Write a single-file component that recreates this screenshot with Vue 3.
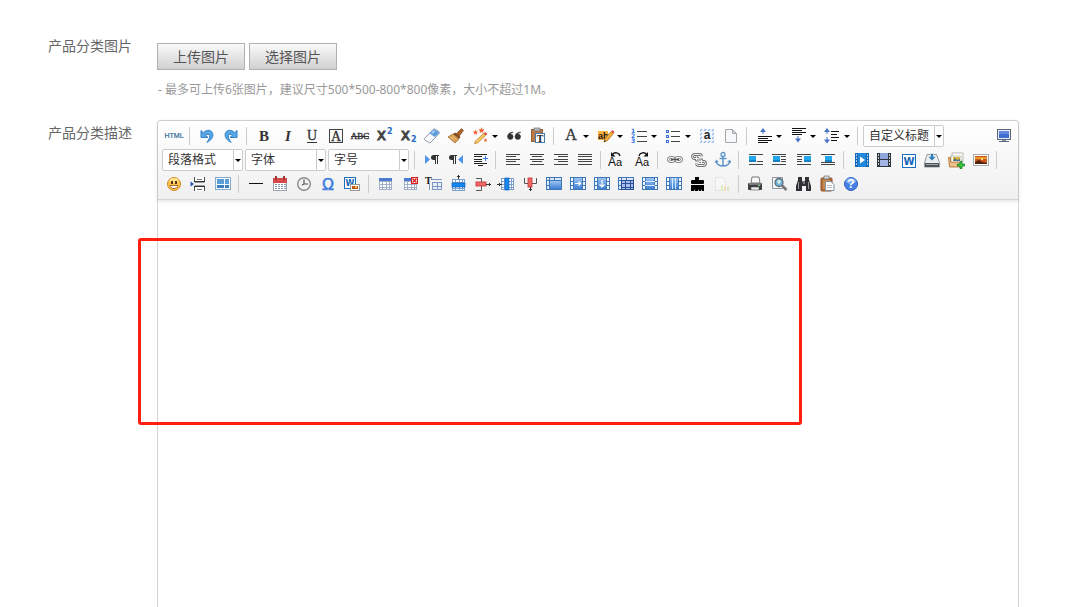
<script setup>
const r = (x, y, w, h, f, extra = '') => `<rect x="${x}" y="${y}" width="${w}" height="${h}" fill="${f}" ${extra}/>`
const p = (d, f = 'none', s = 'none', w = 1, extra = '') =>
  `<path d="${d}" fill="${f}" stroke="${s}" stroke-width="${w}" ${extra}/>`
const t = (x, y, size, text, fill, extra = '') =>
  `<text x="${x}" y="${y}" font-size="${size}" fill="${fill}" ${extra}>${text}</text>`
const serif = 'font-family="Liberation Serif, serif"'
const sans = 'font-family="Liberation Sans, sans-serif"'
const wide = 'font-family="DejaVu Sans, sans-serif" font-weight="bold"'
const mid = 'text-anchor="middle"'
const lines = (list, color = '#444') => list.map(([x, y, w]) => r(x, y, w, 1, color)).join('')
const mirror = (s) => `<g transform="translate(20 0) scale(-1 1)">${s}</g>`

const undo = p('M4 4.5v7h7L8.6 9.3c1.6-1.5 3.5-1.4 4 .2.5 2-.7 4.300-2.800 6.800 4.200-1.800 6.600-5 6-8.300C15 4 10.500 2.700 6.300 6.700z', '#5aa7e6', '#2f80c8')
const pilcrow = (x) =>
  p(`M${x + 3} 5.500h5M${x + 4.500} 5v9M${x + 6.500} 5v9`, 'none', '#333', 1) +
  p(`M${x + 4} 5H${x + 2.500}a2.500 2.500 0 0 0 0 5H${x + 4}z`, '#333')
const pencil = p('M8 16l1-3.500 6-7 2.500 2-6 7z', '#f0b03a', '#a8682a', 0.8) + p('M15 5.500l1.500-1.500 2 1.800-1.200 1.700z', '#e0504a') + p('M8 16l.6-2 1.400 1.200z', '#333')
const aa = (x, flip) =>
  t(x, 16, 12, 'A', '#111', sans) + t(x + 8, 16, 11, 'a', '#111', sans) +
  (flip
    ? p(`M${x + 4} 6c1-4 6-4 7.500-1.500`, 'none', '#111', 1.3) + p(`M${x + 13} 2v4.500H${x + 8.500}z`, '#111')
    : p(`M${x + 12} 6c-1-4-6-4-7.500-1.500`, 'none', '#111', 1.3) + p(`M${x + 3} 2v4.500h4.500z`, '#111'))
const upArrow = (x, y) => p(`M${x} ${y}l-3 4h6z`, '#4a70c8') + r(x - 0.5, y + 3, 1, 3, '#4a70c8')
const downArrow = (x, y) => r(x - 0.5, y, 1, 3, '#4a70c8') + p(`M${x} ${y + 6.500}l-3-4h6z`, '#4a70c8')
const photo = (x) => r(x, 6, 7, 6, '#1580c8') + r(x, 6, 7, 4, '#22a6ee')
const grid = (x, y, w, h, nx, ny, line = '#5f7fb5', fill = '#fff') => {
  let s = r(x + 0.5, y + 0.5, w - 1, h - 1, fill, `stroke="${line}"`)
  for (let i = 1; i < nx; i++) s += r(x + Math.round((w * i) / nx), y, 1, h, line)
  for (let i = 1; i < ny; i++) s += r(x, y + Math.round((h * i) / ny), w, 1, line)
  return s
}
const blueBox = 'url(#cell-blue)'
const edge = '#3f78b8'
const sideCells = r(2.5, 3.5, 15, 12, '#f4f9ff', `stroke="${edge}"`) + r(2, 7, 16, 1, edge) + r(2, 11, 16, 1, edge) + r(5, 3, 10, 13, edge) + r(6, 4, 8, 11, blueBox)
const topCells = r(2.5, 3.5, 15, 12, '#dce8fb', `stroke="${edge}"`) + r(5, 3, 1, 13, edge) + r(10, 3, 1, 4, edge) + r(2, 6, 16, 1, edge) + r(2, 11, 4, 1, edge)
const wordTile = (x, y, s) => r(x + 0.5, y + 0.5, s - 1, s - 1, '#fff', 'stroke="#1b6fc0"') + t(x + s / 2, y + s - 3, s - 4, 'W', '#1565b8', `${wide} ${mid}`)
const clipboard = r(3, 4, 11, 13, '#b5713c', 'rx="1" stroke="#8a4f27"') + r(6, 2, 5, 3, '#d8d8d8', 'stroke="#777" stroke-width=".7"') + r(5, 6, 7, 9, '#c98a50')

const icons = {
  html: t(10, 12, 7, 'HTML', '#2c6c99', `${sans} ${mid} stroke="#2c6c99" stroke-width=".2"`),
  undo,
  redo: mirror(undo),
  bold: t(10, 15, 15, 'B', '#333', `${serif} font-weight="bold" ${mid}`),
  italic: t(10, 15, 15, 'I', '#333', `${serif} font-weight="bold" font-style="italic" ${mid}`),
  underline: t(10, 14, 14, 'U', '#333', `${serif} ${mid} stroke="#333" stroke-width=".3"`) + r(5, 16, 10, 1, '#333'),
  border: r(3.5, 3.5, 13, 13, 'none', 'stroke="#444"') + t(10, 15, 14, 'A', '#333', `${serif} ${mid} stroke="#333" stroke-width=".3"`),
  strike: t(10, 13, 9, 'ABC', '#333', `${serif} ${mid} stroke="#333" stroke-width=".4"`) + r(1, 10, 18, 1, '#333'),
  sup: t(3, 14, 15, 'x', '#444', 'font-family="DejaVu Sans" stroke="#444"') + t(13, 8, 8, '2', '#2867c8', wide),
  sub: t(3, 14, 15, 'x', '#444', 'font-family="DejaVu Sans" stroke="#444"') + t(13, 16, 8, '2', '#2867c8', wide),
  eraser: p('M2.500 12.500l8.500-9q1-1 2-.4l4 2.500q1 .8.300 1.700l-8.500 9q-1 .8-2 .2l-4-2.500q-.8-.6-.3-1.500z', '#f7f9fb', '#8e98a8') + p('M7.500 7.500L11.200 3.700q.8-.7 1.600-.2l3.800 2.400q.8.600.200 1.300L13 11z', '#5a9be0') + p('M9 7l3-3 1.500 1-3 3z', '#a5cdf4'),
  brush: p('M10 8l5.500-5.500 2 2L13 10.500z', '#a8642c', '#7c451a', 0.6) + p('M9 6.500l5.500 4.500-1.500 2-6-5z', '#7e4a20') + p('M7 8l6 5-4 4-7-6z', '#d69a50', '#9b622a', 0.7) + p('M4 11l4 3M6 9.500l4.500 4', 'none', '#f3cd8c'),
  wand: p('M5.500 15L13.500 7.500l2 2-8 7.500-3 .5z', '#f6c95c', '#b67725', 0.7) + p('M13.500 7.500l2-1.500 2 2-2 1.500z', '#d75a42') + p('M11.500 1l.9 2.200 2.400.2-1.800 1.500.5 2.300-2-1.200-2 1.200.5-2.300-1.800-1.500 2.400-.2zM5.500 3.500l.8 1.900 2 .1-1.500 1.300.5 2-1.800-1.100-1.800 1.100.5-2-1.500-1.300 2-.1zM15.500 12l.6 1.500 1.500.1-1.200 1 .4 1.500-1.300-.8-1.300.8.400-1.500-1.200-1 1.500-.1z', '#f0683a'),
  quote: p('M9 6C5.500 6.200 3.500 8 3.500 10.800a2.800 2.800 0 1 0 2.600-2.900C6.800 7.200 7.600 6.700 9 6.500zM16.500 6C13 6.200 11 8 11 10.800a2.800 2.800 0 1 0 2.600-2.900c.7-.7 1.500-1.200 2.900-1.400z', '#333', '#333', 0.5),
  pasteText: r(3.5, 3.5, 11, 12, '#b97a4a', 'stroke="#94603a"') + r(6, 2, 6, 3, '#bbb', 'stroke="#666" stroke-width=".6"') + r(7.5, 7.5, 9, 9, '#fff', 'stroke="#4b78ac"') + t(12, 16, 10, 'T', '#222', `${serif} font-weight="bold" ${mid}`),
  foreColor: t(10, 14, 16, 'A', '#3a3a3a', `${serif} ${mid} stroke="#3a3a3a" stroke-width=".4"`),
  backColor: r(3, 5, 10, 9, '#ffb43c') + t(3, 13, 9, 'ab', '#111', `${sans} font-weight="bold"`) + `<g transform="translate(1 0)">${pencil}</g>`,
  orderedList: lines([[8, 5, 10], [8, 10, 10], [8, 15, 10]]) + [1, 2, 3].map((n, i) => t(2, 7 + i * 5, 6, n, '#2f6fe0', wide)).join(''),
  bulletList: lines([[8, 5, 9], [8, 10, 9], [8, 15, 9]]) + [5, 10, 15].map((y) => r(3.5, y - 0.5, 2, 2, '#dce8ff', 'stroke="#3c6fd8"')).join(''),
  selectAll: r(3, 3, 14, 14, 'url(#hatch)') + r(5, 5, 10, 10, '#f4f7fc') + t(10, 13, 12, 'a', '#222', `${sans} font-weight="bold" ${mid}`),
  page: p('M4.500 3.500h7l4 4v9h-11z', '#f6f7f8', '#a3a9ae') + p('M11.500 3.500v4h4z', '#ccd8e2', '#a3a9ae'),
  spaceTop: upArrow(9, 2) + lines([[4, 10, 14], [4, 12, 10], [4, 14, 14], [4, 16, 10]], '#111'),
  spaceBottom: lines([[4, 2, 14], [4, 4, 10], [4, 6, 14], [4, 8, 10]], '#111') + downArrow(10, 10),
  lineHeight: upArrow(5, 2) + downArrow(5, 11) + lines([[9, 5, 8], [9, 8, 6], [9, 11, 8], [9, 14, 6]], '#111'),
  fullscreen: r(3.5, 3.5, 13, 10, '#e9edf5', 'stroke="#5a6478"') + r(5, 5, 10, 7, '#3f6fd2') + r(5, 5, 10, 3, '#6287dc') + r(8, 14, 4, 1, '#8a93a3') + r(5, 15, 10, 1, '#5a6478'),
  ltr: p('M3 5l5 4.500L3 14z', '#4f93ec') + pilcrow(9),
  rtl: pilcrow(3) + p('M17 5l-5 4.500 5 4.500z', '#4f93ec'),
  indent: lines([[4, 4, 13], [4, 6, 8], [4, 9, 8], [4, 11, 8], [4, 13, 13], [8, 15, 5]], '#222') + r(13, 8, 5, 1, '#2f78e6') + r(15, 6, 1, 5, '#2f78e6'),
  left: lines([[3, 4, 14], [3, 6, 10], [3, 9, 14], [3, 11, 10], [3, 14, 14]]),
  center: lines([[3, 4, 14], [5, 6, 10], [3, 9, 14], [5, 11, 10], [3, 14, 14]]),
  right: lines([[3, 4, 14], [7, 6, 10], [3, 9, 14], [7, 11, 10], [3, 14, 14]]),
  justify: lines([[3, 4, 14], [3, 6, 14], [3, 9, 14], [3, 11, 14], [3, 14, 14]]),
  upper: aa(0, false),
  lower: aa(3, true),
  link: '<g fill="none" stroke="#777"><rect x="2.500" y="6.500" width="8" height="6" rx="3"/><rect x="4.500" y="8.500" width="4" height="2" rx="1"/><rect x="9.500" y="6.500" width="8" height="6" rx="3"/><rect x="11.500" y="8.500" width="4" height="2" rx="1"/></g>' + r(6, 9, 8, 1, '#555'),
  unlink: p('M10 8.500H5.500a2 2 0 0 1 0-4H10.500a2 2 0 0 1 2 2M10 11.500h4.500a2 2 0 0 1 0 4H9.500a2 2 0 0 1-2-2M7.500 6.500v3.500h5v3', 'none', '#777', 2.800) + p('M10 8.500H5.500a2 2 0 0 1 0-4H10.500a2 2 0 0 1 2 2M10 11.500h4.500a2 2 0 0 1 0 4H9.500a2 2 0 0 1-2-2M7.500 6.500v3.500h5v3', 'none', '#f5f5f5'),
  anchor: '<circle cx="10" cy="4.500" r="2" fill="none" stroke="#5c94c8" stroke-width="1.300"/>' + p('M10 6.500V16M6.500 8.500h7M3 11c0 3 3.500 5 7 5s7-2 7-5', 'none', '#5c94c8', 1.500) + p('M2 13l1-3.500L6 12zM18 13l-1-3.500-3 2.500z', '#5c94c8'),
  imgNone: lines([[3, 4, 14], [11, 11, 6], [3, 14, 14]]) + photo(3),
  imgLeft: lines([[2, 4, 14], [11, 6, 5], [11, 9, 5], [11, 11, 5], [2, 14, 14]]) + photo(3),
  imgRight: lines([[3, 4, 14], [3, 6, 5], [3, 9, 5], [3, 11, 5], [3, 14, 14]]) + photo(10),
  imgCenter: lines([[3, 4, 14], [3, 12, 14], [3, 14, 14]]) + photo(7),
  video: r(4, 3, 14, 14, '#1467b5') + r(7, 3, 8, 14, '#2188dc') + [4, 7, 10, 13].map((y) => r(5, y, 1, 2, '#a5cdf0') + r(16, y, 1, 2, '#a5cdf0')).join('') + p('M9 6.500l5 3.500-5 3.500z', '#fff'),
  film: r(2, 3, 14, 14, '#30343c') + r(5, 3, 8, 6, '#8ea6dc') + r(5, 10, 8, 6, '#a2b6e6') + [4, 7, 10, 13].map((y) => r(3, y, 1, 2, '#ccc') + r(14, y, 1, 2, '#ccc')).join(''),
  word: wordTile(3, 4, 14),
  drive: p('M4 4.500h9.500l3 8v4.500H1.500V13z', '#eceef0', '#7e8488', 0.8) + r(2, 13, 14, 4, '#4f5558') + r(3, 14, 12, 1, '#9da3a6') + p('M9 11L5 6.500h2.500V3.500h3v3H13z', '#2f7eb5', '#fff', 0.5),
  gallery: r(5, 3, 11, 8, '#fff', 'stroke="#999" stroke-width=".7"') + r(4, 6, 10, 7, '#fff', 'stroke="#aa8" stroke-width=".7"') + r(6, 7, 7, 4, '#d9b23c') + p('M6 11l2-3 2 2 3-1v2z', '#49719b') + p('M1.500 7.500h2V12h11v5h-12z', '#ecbf86', '#a76b2c', 0.8) + p('M13 11.500h2v2.500h2.500v2H15v2.500h-2V16h-2.500v-2H13z', '#41c843', '#138025', 0.8),
  scene: r(2.5, 4.5, 15, 11, '#fff', 'stroke="#aaa"') + r(4, 6, 12, 8, '#c9561a') + r(4, 7, 12, 2, '#f2972c') + r(10, 8, 2, 2, '#ffe07a') + p('M4 14v-2l4-2 3 2 5 1v1z', '#51200f'),
  smile: '<circle cx="10" cy="10" r="6.500" fill="#ffc54a" stroke="#d08a2c"/><ellipse cx="10" cy="6.500" rx="4.500" ry="2.500" fill="#ffe28b"/>' + r(7, 7, 2, 3, '#5a3213') + r(11, 7, 2, 3, '#5a3213') + p('M6 11.500h8c-.5 4-7.500 4-8 0z', '#fff', '#8b4d1c', 0.8),
  pageBreak: p('M6.500 3v5h10V3M6.500 17v-5h10v5', '#fff', '#434b57', 1) + r(6, 7, 11, 1, '#333') + r(6, 12, 11, 1, '#333') + r(9, 5, 5, 1, '#777') + r(9, 15, 5, 1, '#777') + p('M2.500 7.500L6 10l-3.500 2.500z', '#2452ba'),
  template: r(3.5, 3.5, 15, 12, '#f4faff', 'stroke="#86aac8"') + r(5, 5, 7, 5, '#5a9fd6') + r(5, 11, 7, 3, '#3e80bd') + r(13, 5, 4, 5, '#5a9fd6') + r(13, 11, 4, 3, '#3e80bd'),
  rule: r(3, 9, 14, 1, '#111'),
  calendar: r(3.5, 5.5, 13, 11, '#fff', 'stroke="#9ca5ad"') + r(3, 4, 14, 5, '#d84848') + r(5, 2, 2, 4, '#9d3838') + r(13, 2, 2, 4, '#9d3838') + [10, 12, 14].map((y) => [5, 8, 11, 14].map((x) => r(x, y, 2, 1, '#8195ac')).join('')).join(''),
  clock: '<circle cx="10" cy="10" r="6.300" fill="#f2f2f2" stroke="#8a8a8a" stroke-width="1.400"/>' + p('M10 5.500V10h4M10 10l-2 1', 'none', '#555', 1.200),
  omega: t(10, 16, 16, 'Ω', '#3f7de0', `font-family="Liberation Sans" ${mid} stroke="#3f7de0" stroke-width=".7"`),
  wordImage: wordTile(2, 3, 12) + r(8.5, 10.5, 9, 6, '#fff', 'stroke="#999"') + r(10, 12, 6, 3, '#bd5618') + r(13, 12, 2, 2, '#ffc54a'),
  table: grid(3, 4, 13, 12, 4, 4, '#a1afca') + r(3, 4, 13, 3, '#4d7bd1'),
  deleteTable: grid(4, 4, 13, 12, 4, 4, '#a1afca') + r(4, 4, 13, 3, '#4d7bd1') + r(11.5, 3.5, 6, 6, '#fff', 'stroke="#d91e1e"') + p('M12.500 4.500l4 4M16.500 4.500l-4 4', 'none', '#e01f1f', 1.500),
  tableTitle: t(1, 10, 10, 'T', '#111', `${serif} font-weight="bold"`) + r(7, 5, 11, 1, '#8099bf') + r(5, 9, 1, 7, '#8099bf') + grid(8, 8, 10, 8, 2, 2, '#7f97c0', '#e8effa'),
  insertRow: grid(4, 5, 13, 12, 4, 4, '#7d9fd0') + r(4, 9, 13, 4, '#1689f0', 'stroke="#0e62ba" stroke-width=".7"') + r(10, 1, 1, 4, '#333') + r(9, 2, 3, 1, '#333'),
  deleteRow: p('M4 4.500h5.500V8M4 16.500h5.500V12', 'none', '#555') + r(4, 8, 10, 4, '#f16a66', 'stroke="#c43131" stroke-width=".8"') + r(14, 10, 5, 1, '#333') + r(17, 9, 1, 3, '#333'),
  insertCol: grid(5, 4, 13, 12, 4, 4, '#7d9fd0') + r(9, 4, 4, 12, '#1689f0', 'stroke="#0e62ba" stroke-width=".7"') + r(1, 10, 5, 1, '#333') + r(3, 9, 1, 3, '#333'),
  deleteCol: p('M4.500 4v5.500H8M16.500 4v5.500H12', 'none', '#555') + r(8, 4, 4, 9, '#f16a66', 'stroke="#c43131" stroke-width=".8"') + r(10, 13, 1, 4, '#333') + r(9, 15, 3, 1, '#333'),
  mergeCells: topCells + r(6, 7, 11, 8, blueBox),
  mergeRight: sideCells + p('M7 9.500h6M10.500 7.500l2 2-2 2', 'none', '#fff', 1.200),
  mergeDown: sideCells + p('M10 6v7M7.500 10.500l2.500 2.500 2.500-2.500', 'none', '#fff', 1.200),
  splitCells: topCells + grid(5, 6, 13, 10, 3, 3, '#2c4f94', '#a5bdf0'),
  splitRows: sideCells + r(5, 7, 10, 1, '#d6eaff') + r(5, 11, 10, 1, '#d6eaff'),
  splitCols: sideCells + r(8, 4, 1, 11, '#d6eaff') + r(11, 4, 1, 11, '#d6eaff'),
  clearDoc: r(7, 3, 4, 5, '#000') + r(3, 6, 13, 4, '#000', 'rx="1"') + r(3, 11, 13, 2, '#000') + p('M3 12h13v5h-2v-2l-1 2h-2v-2l-1 2H7v-2l-1 2H3z', '#000'),
  chart: '<g opacity=".35">' + p('M3.500 3.500h7l3 3v10h-10z', '#fff', '#ccc') + r(9, 11, 2, 6, '#c0d860') + r(12, 12, 2, 5, '#efb46b') + r(15, 13, 2, 4, '#a9d077') + '</g>',
  print: p('M5 9l1-6h7l1 6z', '#f8f8f8', '#777') + r(2, 9, 14, 7, '#3c3e42', 'rx="1"') + r(3, 9, 12, 2, '#777b80') + r(5, 13, 8, 3, '#eee', 'stroke="#555" stroke-width=".6"') + r(12, 11, 2, 1, '#8ae088'),
  preview: p('M2.500 3.500h10v11h-10z', '#f5f7f9', '#8d969c') + '<circle cx="9" cy="8.500" r="4" fill="#6eb2da" stroke="#61707a" stroke-width="1.300"/>' + p('M7 7.500l2-2 2 2-2 3z', '#d8f0e0') + p('M12 11.500l4.500 4.500', 'none', '#777', 2.600),
  search: r(4, 3, 4, 4, '#333') + r(11, 3, 4, 4, '#333') + p('M4 6h4l1 3h1l1-3h4l2 6v5h-5v-5H8v5H2v-5z', '#2e3033') + r(4, 8, 1, 7, '#92979b') + r(14, 8, 1, 7, '#92979b') + r(9, 7, 2, 3, '#73787c'),
  paste: clipboard + p('M7.500 7.500h5.500l3 3v6h-8.500z', '#fff', '#8494a8') + lines([[9, 11, 5], [9, 13, 5]], '#bbc'),
  help: '<circle cx="9" cy="10" r="6.500" fill="#4480e8" stroke="#3463bd"/><ellipse cx="9" cy="7" rx="5" ry="3" fill="#82aef4"/>' + t(9, 14, 12, '?', '#fff', `${sans} font-weight="bold" ${mid}`)
}

const menus = ['wand', 'foreColor', 'backColor', 'orderedList', 'bulletList', 'spaceTop', 'spaceBottom', 'lineHeight']
const rows = [
  'html | undo redo | bold italic underline border strike sup sub eraser brush wand quote pasteText | foreColor backColor orderedList bulletList selectAll page | spaceTop spaceBottom lineHeight | #自定义标题 > fullscreen',
  '#段落格式 #字体 #字号 | ltr rtl indent | left center right justify | upper lower | link unlink anchor | imgNone imgLeft imgRight imgCenter | video film word drive gallery scene |',
  'smile pageBreak template | rule calendar clock omega wordImage | table deleteTable tableTitle insertRow deleteRow insertCol deleteCol mergeCells mergeRight mergeDown splitCells splitRows splitCols clearDoc chart | print preview search paste help'
].map((line) => line.split(' '))
</script>

<template>
  <main class="page">
    <svg class="defs" width="0" height="0" aria-hidden="true">
      <defs>
        <linearGradient id="cell-blue" x2="0" y2="1">
          <stop offset="0" stop-color="#9cc4f2" />
          <stop offset="1" stop-color="#3f7fd4" />
        </linearGradient>
        <pattern id="hatch" width="4" height="4" patternUnits="userSpaceOnUse">
          <rect width="4" height="4" fill="#fff" />
          <path d="M-1 1l2-2M0 4l4-4M3 5l2-2" stroke="#8fb4f0" stroke-width="1.3" />
        </pattern>
      </defs>
    </svg>
    <section class="row">
      <div class="label">产品分类图片</div>
      <div class="field upload">
        <div class="actions">
          <button type="button" class="action">上传图片</button>
          <button type="button" class="action">选择图片</button>
        </div>
        <p class="hint">- 最多可上传6张图片，建议尺寸500*500-800*800像素，大小不超过1M。</p>
      </div>
    </section>
    <section class="row grow">
      <div class="label description">产品分类描述</div>
      <div class="field editor">
        <div class="toolbar" role="toolbar">
          <div v-for="(items, i) in rows" :key="i" class="tools">
            <template v-for="(item, j) in items" :key="j">
              <span v-if="item === '|'" class="separator"></span>
              <span v-else-if="item === '>'" class="spacer"></span>
              <div v-else-if="item[0] === '#'" class="combo">
                <select :aria-label="item.slice(1)">
                  <option>{{ item.slice(1) }}</option>
                </select>
                <span class="drop"><i class="caret"></i></span>
              </div>
              <button v-else type="button" class="tool" :aria-label="item">
                <svg width="20" height="20" viewBox="0 0 20 20" v-html="icons[item]"></svg>
                <span v-if="menus.includes(item)" class="menu"><i class="caret"></i></span>
              </button>
            </template>
          </div>
        </div>
        <div class="body" contenteditable="true" role="textbox" aria-label="产品分类描述"></div>
        <div class="highlight"></div>
      </div>
    </section>
  </main>
</template>

<style>
body {
  background: #fff;
}
</style>

<style scoped>
.page {
  box-sizing: border-box;
  display: flex;
  flex-direction: column;
  gap: 20px;
  min-height: 100vh;
  padding: 36px 72px 0 48px;
  color: #666;
  font-family: "Noto Sans", "Noto Sans CJK SC", sans-serif;
  font-size: 14px;
  line-height: 20px;
}
.defs {
  position: absolute;
}
.row {
  display: flex;
}
.grow {
  flex: 1;
}
.label {
  flex: 0 0 109px;
}
.description {
  padding-top: 3px;
}
.field {
  flex: 1;
  min-width: 0;
}
.upload {
  padding-top: 7px;
}
.actions {
  display: flex;
  gap: 4px;
}
.action {
  box-sizing: border-box;
  height: 27px;
  padding: 0 15px;
  border: 1px solid #b0b0b0;
  background: linear-gradient(#fafafa, #d0d0d0);
  color: #555;
  font: inherit;
}
.hint {
  margin: 10px 0 0;
  padding-left: 1px;
  color: #999;
  font-size: 12px;
}
.editor {
  position: relative;
  display: flex;
  flex-direction: column;
  border: 1px solid #d4d4d4;
  border-bottom: 0;
  border-radius: 4px 4px 0 0;
}
.toolbar {
  padding: 3px 2px 3px 4px;
  border-bottom: 1px solid #d4d4d4;
  border-radius: 4px 4px 0 0;
  background: linear-gradient(#fff, #f0f0f0);
  box-shadow: 0 1px 4px rgba(0, 0, 0, 0.13);
}
.tools {
  display: flex;
  align-items: center;
  height: 24px;
}
.tool {
  display: flex;
  align-items: center;
  flex: none;
  height: 24px;
  padding: 0 2px;
  border: 0;
  background: none;
}
.menu {
  display: flex;
  width: 10px;
  padding-left: 2px;
  margin-right: -2px;
}
.caret {
  border: 3px solid transparent;
  border-top-color: #000;
  border-bottom: 0;
}
.separator {
  box-sizing: border-box;
  flex: none;
  width: 1px;
  height: 18px;
  margin: 0 5px 0 3px;
  background: #ccc;
}
.tools:last-child .separator {
  margin-left: 4px;
}
.spacer {
  flex: 1;
}
.combo {
  position: relative;
  flex: none;
  box-sizing: border-box;
  width: 81px;
  height: 22px;
  margin-right: 2px;
  border: 1px solid #ccc;
  border-radius: 2px;
  background: #fff;
}
.combo select {
  display: block;
  width: 100%;
  height: 20px;
  padding: 0 0 0 5px;
  border: 0;
  appearance: none;
  background: none;
  color: #333;
  font: 12px/20px "Noto Sans", "Noto Sans CJK SC", sans-serif;
}
.drop {
  position: absolute;
  top: 0;
  right: 0;
  bottom: 0;
  display: flex;
  align-items: center;
  padding: 0 1px;
  border-left: 1px solid #ccc;
  pointer-events: none;
}
.body {
  flex: 1;
  outline: 0;
}
.highlight {
  position: absolute;
  top: 117px;
  right: 216px;
  left: -20px;
  box-sizing: border-box;
  height: 187px;
  border: 3px solid #ff1e10;
  border-radius: 3px;
  pointer-events: none;
}
</style>
